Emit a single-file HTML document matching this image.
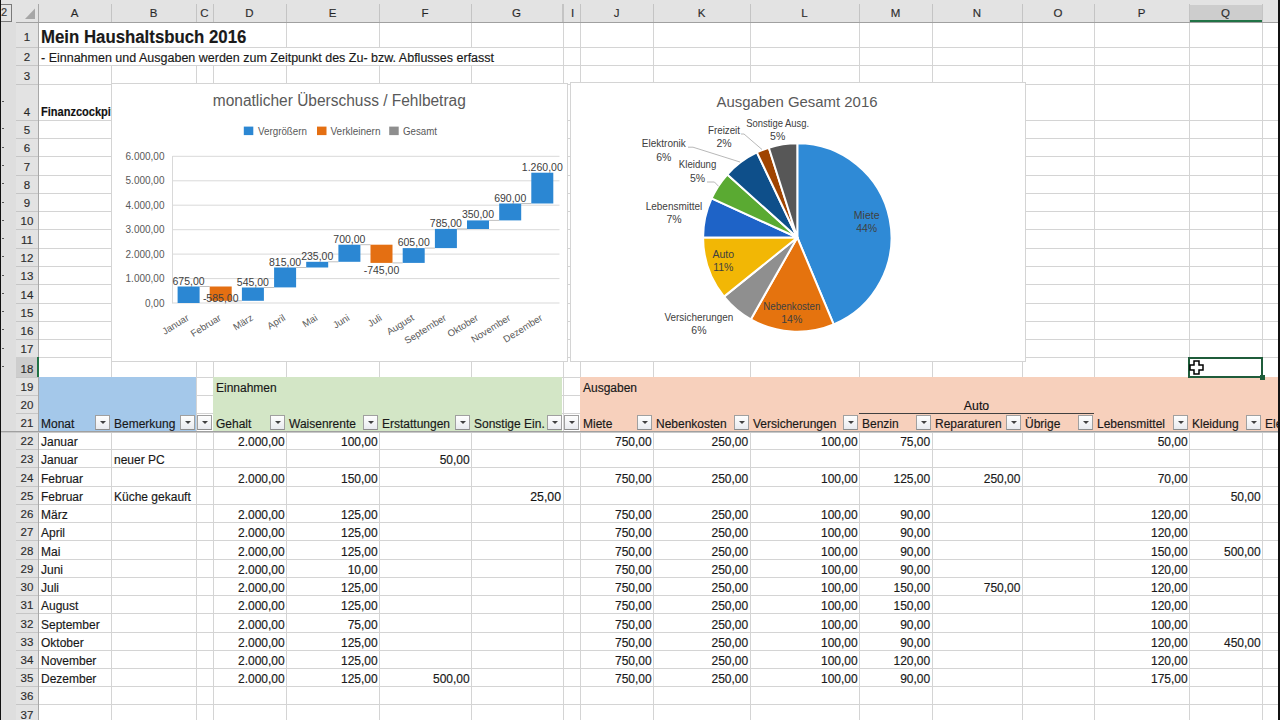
<!DOCTYPE html><html><head><meta charset="utf-8"><style>
html,body{margin:0;padding:0;background:#fff;}
body{width:1280px;height:720px;overflow:hidden;position:relative;font-family:"Liberation Sans", sans-serif;}
.a{position:absolute;}
.t{position:absolute;white-space:nowrap;font-size:12.3px;color:#111;-webkit-text-stroke:0.15px #111;line-height:14px;}
.fb{position:absolute;width:13px;height:13px;border:1px solid #a0a0a0;border-bottom-color:#8c8c8c;background:linear-gradient(#fefefe,#e9ebef);}
.fb:after{content:"";position:absolute;left:4px;top:5px;border-left:3px solid transparent;border-right:3px solid transparent;border-top:3.5px solid #404040;}
</style></head><body>
<div class="a" style="left:111px;top:65px;width:1px;height:655px;background:#d4d4d4"></div>
<div class="a" style="left:196px;top:65px;width:1px;height:655px;background:#d4d4d4"></div>
<div class="a" style="left:213px;top:65px;width:1px;height:655px;background:#d4d4d4"></div>
<div class="a" style="left:286px;top:22px;width:1px;height:25px;background:#d4d4d4"></div>
<div class="a" style="left:286px;top:65px;width:1px;height:655px;background:#d4d4d4"></div>
<div class="a" style="left:379px;top:22px;width:1px;height:25px;background:#d4d4d4"></div>
<div class="a" style="left:379px;top:65px;width:1px;height:655px;background:#d4d4d4"></div>
<div class="a" style="left:471px;top:22px;width:1px;height:25px;background:#d4d4d4"></div>
<div class="a" style="left:471px;top:65px;width:1px;height:655px;background:#d4d4d4"></div>
<div class="a" style="left:563px;top:22px;width:1px;height:698px;background:#d4d4d4"></div>
<div class="a" style="left:580px;top:22px;width:1px;height:698px;background:#d4d4d4"></div>
<div class="a" style="left:653px;top:22px;width:1px;height:698px;background:#d4d4d4"></div>
<div class="a" style="left:750px;top:22px;width:1px;height:698px;background:#d4d4d4"></div>
<div class="a" style="left:859px;top:22px;width:1px;height:698px;background:#d4d4d4"></div>
<div class="a" style="left:932px;top:22px;width:1px;height:698px;background:#d4d4d4"></div>
<div class="a" style="left:1022px;top:22px;width:1px;height:698px;background:#d4d4d4"></div>
<div class="a" style="left:1094px;top:22px;width:1px;height:698px;background:#d4d4d4"></div>
<div class="a" style="left:1189px;top:22px;width:1px;height:698px;background:#d4d4d4"></div>
<div class="a" style="left:1262px;top:22px;width:1px;height:698px;background:#d4d4d4"></div>
<div class="a" style="left:38px;top:47px;width:1242px;height:1px;background:#d4d4d4"></div>
<div class="a" style="left:38px;top:65px;width:1242px;height:1px;background:#d4d4d4"></div>
<div class="a" style="left:38px;top:84px;width:1242px;height:1px;background:#d4d4d4"></div>
<div class="a" style="left:38px;top:120px;width:1242px;height:1px;background:#d4d4d4"></div>
<div class="a" style="left:38px;top:138px;width:1242px;height:1px;background:#d4d4d4"></div>
<div class="a" style="left:38px;top:156px;width:1242px;height:1px;background:#d4d4d4"></div>
<div class="a" style="left:38px;top:175px;width:1242px;height:1px;background:#d4d4d4"></div>
<div class="a" style="left:38px;top:193px;width:1242px;height:1px;background:#d4d4d4"></div>
<div class="a" style="left:38px;top:211px;width:1242px;height:1px;background:#d4d4d4"></div>
<div class="a" style="left:38px;top:229px;width:1242px;height:1px;background:#d4d4d4"></div>
<div class="a" style="left:38px;top:248px;width:1242px;height:1px;background:#d4d4d4"></div>
<div class="a" style="left:38px;top:266px;width:1242px;height:1px;background:#d4d4d4"></div>
<div class="a" style="left:38px;top:284px;width:1242px;height:1px;background:#d4d4d4"></div>
<div class="a" style="left:38px;top:303px;width:1242px;height:1px;background:#d4d4d4"></div>
<div class="a" style="left:38px;top:321px;width:1242px;height:1px;background:#d4d4d4"></div>
<div class="a" style="left:38px;top:339px;width:1242px;height:1px;background:#d4d4d4"></div>
<div class="a" style="left:38px;top:357px;width:1242px;height:1px;background:#d4d4d4"></div>
<div class="a" style="left:38px;top:377px;width:1242px;height:1px;background:#d4d4d4"></div>
<div class="a" style="left:38px;top:395px;width:1242px;height:1px;background:#d4d4d4"></div>
<div class="a" style="left:38px;top:413px;width:1242px;height:1px;background:#d4d4d4"></div>
<div class="a" style="left:38px;top:431px;width:1242px;height:1px;background:#d4d4d4"></div>
<div class="a" style="left:38px;top:449px;width:1242px;height:1px;background:#d4d4d4"></div>
<div class="a" style="left:38px;top:467px;width:1242px;height:1px;background:#d4d4d4"></div>
<div class="a" style="left:38px;top:486px;width:1242px;height:1px;background:#d4d4d4"></div>
<div class="a" style="left:38px;top:504px;width:1242px;height:1px;background:#d4d4d4"></div>
<div class="a" style="left:38px;top:522px;width:1242px;height:1px;background:#d4d4d4"></div>
<div class="a" style="left:38px;top:540px;width:1242px;height:1px;background:#d4d4d4"></div>
<div class="a" style="left:38px;top:559px;width:1242px;height:1px;background:#d4d4d4"></div>
<div class="a" style="left:38px;top:577px;width:1242px;height:1px;background:#d4d4d4"></div>
<div class="a" style="left:38px;top:595px;width:1242px;height:1px;background:#d4d4d4"></div>
<div class="a" style="left:38px;top:613px;width:1242px;height:1px;background:#d4d4d4"></div>
<div class="a" style="left:38px;top:632px;width:1242px;height:1px;background:#d4d4d4"></div>
<div class="a" style="left:38px;top:650px;width:1242px;height:1px;background:#d4d4d4"></div>
<div class="a" style="left:38px;top:668px;width:1242px;height:1px;background:#d4d4d4"></div>
<div class="a" style="left:38px;top:686px;width:1242px;height:1px;background:#d4d4d4"></div>
<div class="a" style="left:38px;top:704px;width:1242px;height:1px;background:#d4d4d4"></div>
<div class="a" style="left:38px;top:377px;width:158px;height:54px;background:#a4c8ea;"></div>
<div class="a" style="left:213px;top:377px;width:349px;height:54px;background:#d3e6c6;"></div>
<div class="a" style="left:580px;top:377px;width:700px;height:54px;background:#f7d0bc;"></div>
<div class="a" style="left:1px;top:0px;width:15px;height:720px;background:#dedede;"></div>
<div class="a" style="left:0px;top:0px;width:1px;height:720px;background:#111;"></div>
<div class="a" style="left:1278px;top:0px;width:2px;height:720px;background:#111;"></div>
<div class="a" style="left:16px;top:22px;width:22px;height:698px;background:#e3e3e3;"></div>
<div class="a" style="left:16px;top:47px;width:22px;height:1px;background:#c6c6c6"></div>
<div class="t" style="left:16px;width:22px;text-align:center;top:30px;font-size:11.5px;color:#333">1</div>
<div class="a" style="left:16px;top:65px;width:22px;height:1px;background:#c6c6c6"></div>
<div class="t" style="left:16px;width:22px;text-align:center;top:50px;font-size:11.5px;color:#333">2</div>
<div class="a" style="left:16px;top:84px;width:22px;height:1px;background:#c6c6c6"></div>
<div class="t" style="left:16px;width:22px;text-align:center;top:69px;font-size:11.5px;color:#333">3</div>
<div class="a" style="left:16px;top:120px;width:22px;height:1px;background:#c6c6c6"></div>
<div class="t" style="left:16px;width:22px;text-align:center;top:105px;font-size:11.5px;color:#333">4</div>
<div class="a" style="left:16px;top:138px;width:22px;height:1px;background:#c6c6c6"></div>
<div class="t" style="left:16px;width:22px;text-align:center;top:123px;font-size:11.5px;color:#333">5</div>
<div class="a" style="left:16px;top:156px;width:22px;height:1px;background:#c6c6c6"></div>
<div class="t" style="left:16px;width:22px;text-align:center;top:141px;font-size:11.5px;color:#333">6</div>
<div class="a" style="left:16px;top:175px;width:22px;height:1px;background:#c6c6c6"></div>
<div class="t" style="left:16px;width:22px;text-align:center;top:160px;font-size:11.5px;color:#333">7</div>
<div class="a" style="left:16px;top:193px;width:22px;height:1px;background:#c6c6c6"></div>
<div class="t" style="left:16px;width:22px;text-align:center;top:178px;font-size:11.5px;color:#333">8</div>
<div class="a" style="left:16px;top:211px;width:22px;height:1px;background:#c6c6c6"></div>
<div class="t" style="left:16px;width:22px;text-align:center;top:196px;font-size:11.5px;color:#333">9</div>
<div class="a" style="left:16px;top:229px;width:22px;height:1px;background:#c6c6c6"></div>
<div class="t" style="left:16px;width:22px;text-align:center;top:214px;font-size:11.5px;color:#333">10</div>
<div class="a" style="left:16px;top:248px;width:22px;height:1px;background:#c6c6c6"></div>
<div class="t" style="left:16px;width:22px;text-align:center;top:233px;font-size:11.5px;color:#333">11</div>
<div class="a" style="left:16px;top:266px;width:22px;height:1px;background:#c6c6c6"></div>
<div class="t" style="left:16px;width:22px;text-align:center;top:251px;font-size:11.5px;color:#333">12</div>
<div class="a" style="left:16px;top:284px;width:22px;height:1px;background:#c6c6c6"></div>
<div class="t" style="left:16px;width:22px;text-align:center;top:269px;font-size:11.5px;color:#333">13</div>
<div class="a" style="left:16px;top:303px;width:22px;height:1px;background:#c6c6c6"></div>
<div class="t" style="left:16px;width:22px;text-align:center;top:288px;font-size:11.5px;color:#333">14</div>
<div class="a" style="left:16px;top:321px;width:22px;height:1px;background:#c6c6c6"></div>
<div class="t" style="left:16px;width:22px;text-align:center;top:306px;font-size:11.5px;color:#333">15</div>
<div class="a" style="left:16px;top:339px;width:22px;height:1px;background:#c6c6c6"></div>
<div class="t" style="left:16px;width:22px;text-align:center;top:324px;font-size:11.5px;color:#333">16</div>
<div class="a" style="left:16px;top:357px;width:22px;height:1px;background:#c6c6c6"></div>
<div class="t" style="left:16px;width:22px;text-align:center;top:342px;font-size:11.5px;color:#333">17</div>
<div class="a" style="left:16px;top:357px;width:22px;height:20px;background:#cdcdcd;"></div>
<div class="a" style="left:16px;top:377px;width:22px;height:1px;background:#c6c6c6"></div>
<div class="t" style="left:16px;width:22px;text-align:center;top:362px;font-size:11.5px;color:#333">18</div>
<div class="a" style="left:16px;top:395px;width:22px;height:1px;background:#c6c6c6"></div>
<div class="t" style="left:16px;width:22px;text-align:center;top:380px;font-size:11.5px;color:#333">19</div>
<div class="a" style="left:16px;top:413px;width:22px;height:1px;background:#c6c6c6"></div>
<div class="t" style="left:16px;width:22px;text-align:center;top:398px;font-size:11.5px;color:#333">20</div>
<div class="a" style="left:16px;top:431px;width:22px;height:1px;background:#c6c6c6"></div>
<div class="t" style="left:16px;width:22px;text-align:center;top:416px;font-size:11.5px;color:#333">21</div>
<div class="a" style="left:16px;top:449px;width:22px;height:1px;background:#c6c6c6"></div>
<div class="t" style="left:16px;width:22px;text-align:center;top:434px;font-size:11.5px;color:#333">22</div>
<div class="a" style="left:16px;top:467px;width:22px;height:1px;background:#c6c6c6"></div>
<div class="t" style="left:16px;width:22px;text-align:center;top:452px;font-size:11.5px;color:#333">23</div>
<div class="a" style="left:16px;top:486px;width:22px;height:1px;background:#c6c6c6"></div>
<div class="t" style="left:16px;width:22px;text-align:center;top:471px;font-size:11.5px;color:#333">24</div>
<div class="a" style="left:16px;top:504px;width:22px;height:1px;background:#c6c6c6"></div>
<div class="t" style="left:16px;width:22px;text-align:center;top:489px;font-size:11.5px;color:#333">25</div>
<div class="a" style="left:16px;top:522px;width:22px;height:1px;background:#c6c6c6"></div>
<div class="t" style="left:16px;width:22px;text-align:center;top:507px;font-size:11.5px;color:#333">26</div>
<div class="a" style="left:16px;top:540px;width:22px;height:1px;background:#c6c6c6"></div>
<div class="t" style="left:16px;width:22px;text-align:center;top:525px;font-size:11.5px;color:#333">27</div>
<div class="a" style="left:16px;top:559px;width:22px;height:1px;background:#c6c6c6"></div>
<div class="t" style="left:16px;width:22px;text-align:center;top:544px;font-size:11.5px;color:#333">28</div>
<div class="a" style="left:16px;top:577px;width:22px;height:1px;background:#c6c6c6"></div>
<div class="t" style="left:16px;width:22px;text-align:center;top:562px;font-size:11.5px;color:#333">29</div>
<div class="a" style="left:16px;top:595px;width:22px;height:1px;background:#c6c6c6"></div>
<div class="t" style="left:16px;width:22px;text-align:center;top:580px;font-size:11.5px;color:#333">30</div>
<div class="a" style="left:16px;top:613px;width:22px;height:1px;background:#c6c6c6"></div>
<div class="t" style="left:16px;width:22px;text-align:center;top:598px;font-size:11.5px;color:#333">31</div>
<div class="a" style="left:16px;top:632px;width:22px;height:1px;background:#c6c6c6"></div>
<div class="t" style="left:16px;width:22px;text-align:center;top:617px;font-size:11.5px;color:#333">32</div>
<div class="a" style="left:16px;top:650px;width:22px;height:1px;background:#c6c6c6"></div>
<div class="t" style="left:16px;width:22px;text-align:center;top:635px;font-size:11.5px;color:#333">33</div>
<div class="a" style="left:16px;top:668px;width:22px;height:1px;background:#c6c6c6"></div>
<div class="t" style="left:16px;width:22px;text-align:center;top:653px;font-size:11.5px;color:#333">34</div>
<div class="a" style="left:16px;top:686px;width:22px;height:1px;background:#c6c6c6"></div>
<div class="t" style="left:16px;width:22px;text-align:center;top:671px;font-size:11.5px;color:#333">35</div>
<div class="a" style="left:16px;top:704px;width:22px;height:1px;background:#c6c6c6"></div>
<div class="t" style="left:16px;width:22px;text-align:center;top:689px;font-size:11.5px;color:#333">36</div>
<div class="a" style="left:16px;top:723px;width:22px;height:1px;background:#c6c6c6"></div>
<div class="t" style="left:16px;width:22px;text-align:center;top:708px;font-size:11.5px;color:#333">37</div>
<div class="a" style="left:38px;top:22px;width:1px;height:698px;background:#a8a8a8"></div>
<div class="a" style="left:37px;top:357px;width:2px;height:20px;background:#217346;"></div>
<div class="a" style="left:1px;top:0px;width:1277px;height:22px;background:#e3e3e3;"></div>
<div class="a" style="left:1189px;top:5px;width:73px;height:17px;background:#cdcdcd;"></div>
<div class="a" style="left:1189px;top:20px;width:73px;height:2px;background:#217346;"></div>
<div class="a" style="left:16px;top:22px;width:1262px;height:1px;background:#a0a0a0"></div>
<div class="a" style="left:111px;top:4px;width:1px;height:18px;background:#c4c4c4"></div>
<div class="a" style="left:196px;top:4px;width:1px;height:18px;background:#c4c4c4"></div>
<div class="a" style="left:213px;top:4px;width:1px;height:18px;background:#c4c4c4"></div>
<div class="a" style="left:286px;top:4px;width:1px;height:18px;background:#c4c4c4"></div>
<div class="a" style="left:379px;top:4px;width:1px;height:18px;background:#c4c4c4"></div>
<div class="a" style="left:471px;top:4px;width:1px;height:18px;background:#c4c4c4"></div>
<div class="a" style="left:563px;top:4px;width:1px;height:18px;background:#c4c4c4"></div>
<div class="a" style="left:580px;top:4px;width:1px;height:18px;background:#c4c4c4"></div>
<div class="a" style="left:653px;top:4px;width:1px;height:18px;background:#c4c4c4"></div>
<div class="a" style="left:750px;top:4px;width:1px;height:18px;background:#c4c4c4"></div>
<div class="a" style="left:859px;top:4px;width:1px;height:18px;background:#c4c4c4"></div>
<div class="a" style="left:932px;top:4px;width:1px;height:18px;background:#c4c4c4"></div>
<div class="a" style="left:1022px;top:4px;width:1px;height:18px;background:#c4c4c4"></div>
<div class="a" style="left:1094px;top:4px;width:1px;height:18px;background:#c4c4c4"></div>
<div class="a" style="left:1189px;top:4px;width:1px;height:18px;background:#c4c4c4"></div>
<div class="a" style="left:1262px;top:4px;width:1px;height:18px;background:#c4c4c4"></div>
<div class="a" style="left:562px;top:4px;width:1px;height:18px;background:#c4c4c4"></div>
<div class="a" style="left:38px;top:4px;width:1px;height:18px;background:#a8a8a8"></div>
<div class="t" style="left:38px;width:73px;text-align:center;top:6px;font-size:11.5px;color:#333">A</div>
<div class="t" style="left:111px;width:85px;text-align:center;top:6px;font-size:11.5px;color:#333">B</div>
<div class="t" style="left:196px;width:17px;text-align:center;top:6px;font-size:11.5px;color:#333">C</div>
<div class="t" style="left:213px;width:73px;text-align:center;top:6px;font-size:11.5px;color:#333">D</div>
<div class="t" style="left:286px;width:93px;text-align:center;top:6px;font-size:11.5px;color:#333">E</div>
<div class="t" style="left:379px;width:92px;text-align:center;top:6px;font-size:11.5px;color:#333">F</div>
<div class="t" style="left:471px;width:91px;text-align:center;top:6px;font-size:11.5px;color:#333">G</div>
<div class="t" style="left:565px;width:15px;text-align:center;top:6px;font-size:11.5px;color:#333">I</div>
<div class="t" style="left:580px;width:73px;text-align:center;top:6px;font-size:11.5px;color:#333">J</div>
<div class="t" style="left:653px;width:97px;text-align:center;top:6px;font-size:11.5px;color:#333">K</div>
<div class="t" style="left:750px;width:109px;text-align:center;top:6px;font-size:11.5px;color:#333">L</div>
<div class="t" style="left:859px;width:73px;text-align:center;top:6px;font-size:11.5px;color:#333">M</div>
<div class="t" style="left:932px;width:90px;text-align:center;top:6px;font-size:11.5px;color:#333">N</div>
<div class="t" style="left:1022px;width:72px;text-align:center;top:6px;font-size:11.5px;color:#333">O</div>
<div class="t" style="left:1094px;width:95px;text-align:center;top:6px;font-size:11.5px;color:#333">P</div>
<div class="t" style="left:1189px;width:73px;text-align:center;top:6px;font-size:11.5px;color:#333">Q</div>
<svg class="a" style="left:0;top:0" width="40" height="22"><polygon points="25,19 35,19 35,8.5" fill="#a6a6a6"/></svg>
<div class="a" style="left:1px;top:4px;width:10px;height:16px;border:1px solid #7a7a7a;border-left:none;background:#e4e4e4"></div>
<div class="t" style="left:1px;top:5px;font-size:11px;color:#444">2</div>
<div class="a" style="left:2px;top:101px;width:2px;height:1px;background:#555;"></div>
<div class="a" style="left:2px;top:128px;width:2px;height:1px;background:#555;"></div>
<div class="a" style="left:2px;top:147px;width:2px;height:1px;background:#555;"></div>
<div class="a" style="left:2px;top:165px;width:2px;height:1px;background:#555;"></div>
<div class="a" style="left:2px;top:183px;width:2px;height:1px;background:#555;"></div>
<div class="a" style="left:2px;top:202px;width:2px;height:1px;background:#555;"></div>
<div class="a" style="left:2px;top:220px;width:2px;height:1px;background:#555;"></div>
<div class="a" style="left:2px;top:238px;width:2px;height:1px;background:#555;"></div>
<div class="a" style="left:2px;top:256px;width:2px;height:1px;background:#555;"></div>
<div class="a" style="left:2px;top:275px;width:2px;height:1px;background:#555;"></div>
<div class="a" style="left:2px;top:293px;width:2px;height:1px;background:#555;"></div>
<div class="a" style="left:2px;top:311px;width:2px;height:1px;background:#555;"></div>
<div class="a" style="left:2px;top:329px;width:2px;height:1px;background:#555;"></div>
<div class="a" style="left:2px;top:348px;width:2px;height:1px;background:#555;"></div>
<div class="a" style="left:2px;top:366px;width:2px;height:1px;background:#555;"></div>
<div class="a" style="left:1px;top:431px;width:1277px;height:1px;background:#a0a0a0"></div>
<div class="a" style="left:1px;top:432px;width:1277px;height:1px;background:#c8c8c8"></div>
<div class="t" style="left:41px;top:30px;font-weight:bold;font-size:17.5px;color:#1a1a1a;transform:scaleX(0.96);transform-origin:0 0;">Mein Haushaltsbuch 2016</div>
<div class="t" style="left:41px;top:51px;font-size:12.5px;color:#1a1a1a;">- Einnahmen und Ausgaben werden zum Zeitpunkt des Zu- bzw. Abflusses erfasst</div>
<div class="a" style="left:41px;top:104px;width:70px;height:16px;overflow:hidden"><div class="t" style="left:0;top:1px;font-weight:bold;font-size:12px;transform:scaleX(0.92);transform-origin:0 0">Finanzcockpit</div></div>
<div class="t" style="left:216px;top:381px;font-size:12px;color:#1a1a1a;">Einnahmen</div>
<div class="t" style="left:583px;top:381px;font-size:12px;color:#1a1a1a;">Ausgaben</div>
<div class="t" style="left:859px;width:235px;text-align:center;top:399px">Auto</div>
<div class="a" style="left:859px;top:413px;width:235px;height:1px;background:#404040"></div>
<div class="t" style="left:41px;top:417px;font-size:12px;color:#1a1a1a;">Monat</div>
<div class="fb" style="left:95px;top:415px"></div>
<div class="t" style="left:114px;top:417px;font-size:12px;color:#1a1a1a;">Bemerkung</div>
<div class="fb" style="left:180px;top:415px"></div>
<div class="fb" style="left:197px;top:415px"></div>
<div class="t" style="left:216px;top:417px;font-size:12px;color:#1a1a1a;">Gehalt</div>
<div class="fb" style="left:270px;top:415px"></div>
<div class="t" style="left:289px;top:417px;font-size:12px;color:#1a1a1a;">Waisenrente</div>
<div class="fb" style="left:363px;top:415px"></div>
<div class="t" style="left:382px;top:417px;font-size:12px;color:#1a1a1a;">Erstattungen</div>
<div class="fb" style="left:455px;top:415px"></div>
<div class="t" style="left:474px;top:417px;font-size:12px;color:#1a1a1a;">Sonstige Ein.</div>
<div class="fb" style="left:547px;top:415px"></div>
<div class="fb" style="left:564px;top:415px"></div>
<div class="t" style="left:583px;top:417px;font-size:12px;color:#1a1a1a;">Miete</div>
<div class="fb" style="left:637px;top:415px"></div>
<div class="t" style="left:656px;top:417px;font-size:12px;color:#1a1a1a;">Nebenkosten</div>
<div class="fb" style="left:734px;top:415px"></div>
<div class="t" style="left:753px;top:417px;font-size:12px;color:#1a1a1a;">Versicherungen</div>
<div class="fb" style="left:843px;top:415px"></div>
<div class="t" style="left:862px;top:417px;font-size:12px;color:#1a1a1a;">Benzin</div>
<div class="fb" style="left:916px;top:415px"></div>
<div class="t" style="left:935px;top:417px;font-size:12px;color:#1a1a1a;">Reparaturen</div>
<div class="fb" style="left:1006px;top:415px"></div>
<div class="t" style="left:1025px;top:417px;font-size:12px;color:#1a1a1a;">Übrige</div>
<div class="fb" style="left:1078px;top:415px"></div>
<div class="t" style="left:1097px;top:417px;font-size:12px;color:#1a1a1a;">Lebensmittel</div>
<div class="fb" style="left:1173px;top:415px"></div>
<div class="t" style="left:1192px;top:417px;font-size:12px;color:#1a1a1a;">Kleidung</div>
<div class="fb" style="left:1246px;top:415px"></div>
<div class="t" style="left:1265px;top:417px;font-size:12px;color:#1a1a1a;">Elektronik</div>
<div class="t" style="left:41px;top:435px;font-size:12px;color:#1a1a1a;">Januar</div>
<div class="t" style="right:995.30px;top:435px;font-size:12px;color:#1a1a1a;">2.000,00</div>
<div class="t" style="right:902.30px;top:435px;font-size:12px;color:#1a1a1a;">100,00</div>
<div class="t" style="right:628.30px;top:435px;font-size:12px;color:#1a1a1a;">750,00</div>
<div class="t" style="right:531.80px;top:435px;font-size:12px;color:#1a1a1a;">250,00</div>
<div class="t" style="right:422.30px;top:435px;font-size:12px;color:#1a1a1a;">100,00</div>
<div class="t" style="right:349.80px;top:435px;font-size:12px;color:#1a1a1a;">75,00</div>
<div class="t" style="right:92.30px;top:435px;font-size:12px;color:#1a1a1a;">50,00</div>
<div class="t" style="left:41px;top:453px;font-size:12px;color:#1a1a1a;">Januar</div>
<div class="t" style="left:114px;top:453px;font-size:12px;color:#1a1a1a;">neuer PC</div>
<div class="t" style="right:810.30px;top:453px;font-size:12px;color:#1a1a1a;">50,00</div>
<div class="t" style="left:41px;top:472px;font-size:12px;color:#1a1a1a;">Februar</div>
<div class="t" style="right:995.30px;top:472px;font-size:12px;color:#1a1a1a;">2.000,00</div>
<div class="t" style="right:902.30px;top:472px;font-size:12px;color:#1a1a1a;">150,00</div>
<div class="t" style="right:628.30px;top:472px;font-size:12px;color:#1a1a1a;">750,00</div>
<div class="t" style="right:531.80px;top:472px;font-size:12px;color:#1a1a1a;">250,00</div>
<div class="t" style="right:422.30px;top:472px;font-size:12px;color:#1a1a1a;">100,00</div>
<div class="t" style="right:349.80px;top:472px;font-size:12px;color:#1a1a1a;">125,00</div>
<div class="t" style="right:259.60px;top:472px;font-size:12px;color:#1a1a1a;">250,00</div>
<div class="t" style="right:92.30px;top:472px;font-size:12px;color:#1a1a1a;">70,00</div>
<div class="t" style="left:41px;top:490px;font-size:12px;color:#1a1a1a;">Februar</div>
<div class="t" style="left:114px;top:490px;font-size:12px;color:#1a1a1a;">Küche gekauft</div>
<div class="t" style="right:719px;top:490px">25,00</div>
<div class="t" style="right:19.30px;top:490px;font-size:12px;color:#1a1a1a;">50,00</div>
<div class="t" style="left:41px;top:508px;font-size:12px;color:#1a1a1a;">März</div>
<div class="t" style="right:995.30px;top:508px;font-size:12px;color:#1a1a1a;">2.000,00</div>
<div class="t" style="right:902.30px;top:508px;font-size:12px;color:#1a1a1a;">125,00</div>
<div class="t" style="right:628.30px;top:508px;font-size:12px;color:#1a1a1a;">750,00</div>
<div class="t" style="right:531.80px;top:508px;font-size:12px;color:#1a1a1a;">250,00</div>
<div class="t" style="right:422.30px;top:508px;font-size:12px;color:#1a1a1a;">100,00</div>
<div class="t" style="right:349.80px;top:508px;font-size:12px;color:#1a1a1a;">90,00</div>
<div class="t" style="right:92.30px;top:508px;font-size:12px;color:#1a1a1a;">120,00</div>
<div class="t" style="left:41px;top:526px;font-size:12px;color:#1a1a1a;">April</div>
<div class="t" style="right:995.30px;top:526px;font-size:12px;color:#1a1a1a;">2.000,00</div>
<div class="t" style="right:902.30px;top:526px;font-size:12px;color:#1a1a1a;">125,00</div>
<div class="t" style="right:628.30px;top:526px;font-size:12px;color:#1a1a1a;">750,00</div>
<div class="t" style="right:531.80px;top:526px;font-size:12px;color:#1a1a1a;">250,00</div>
<div class="t" style="right:422.30px;top:526px;font-size:12px;color:#1a1a1a;">100,00</div>
<div class="t" style="right:349.80px;top:526px;font-size:12px;color:#1a1a1a;">90,00</div>
<div class="t" style="right:92.30px;top:526px;font-size:12px;color:#1a1a1a;">120,00</div>
<div class="t" style="left:41px;top:545px;font-size:12px;color:#1a1a1a;">Mai</div>
<div class="t" style="right:995.30px;top:545px;font-size:12px;color:#1a1a1a;">2.000,00</div>
<div class="t" style="right:902.30px;top:545px;font-size:12px;color:#1a1a1a;">125,00</div>
<div class="t" style="right:628.30px;top:545px;font-size:12px;color:#1a1a1a;">750,00</div>
<div class="t" style="right:531.80px;top:545px;font-size:12px;color:#1a1a1a;">250,00</div>
<div class="t" style="right:422.30px;top:545px;font-size:12px;color:#1a1a1a;">100,00</div>
<div class="t" style="right:349.80px;top:545px;font-size:12px;color:#1a1a1a;">90,00</div>
<div class="t" style="right:92.30px;top:545px;font-size:12px;color:#1a1a1a;">150,00</div>
<div class="t" style="right:19.30px;top:545px;font-size:12px;color:#1a1a1a;">500,00</div>
<div class="t" style="left:41px;top:563px;font-size:12px;color:#1a1a1a;">Juni</div>
<div class="t" style="right:995.30px;top:563px;font-size:12px;color:#1a1a1a;">2.000,00</div>
<div class="t" style="right:902.30px;top:563px;font-size:12px;color:#1a1a1a;">10,00</div>
<div class="t" style="right:628.30px;top:563px;font-size:12px;color:#1a1a1a;">750,00</div>
<div class="t" style="right:531.80px;top:563px;font-size:12px;color:#1a1a1a;">250,00</div>
<div class="t" style="right:422.30px;top:563px;font-size:12px;color:#1a1a1a;">100,00</div>
<div class="t" style="right:349.80px;top:563px;font-size:12px;color:#1a1a1a;">90,00</div>
<div class="t" style="right:92.30px;top:563px;font-size:12px;color:#1a1a1a;">120,00</div>
<div class="t" style="left:41px;top:581px;font-size:12px;color:#1a1a1a;">Juli</div>
<div class="t" style="right:995.30px;top:581px;font-size:12px;color:#1a1a1a;">2.000,00</div>
<div class="t" style="right:902.30px;top:581px;font-size:12px;color:#1a1a1a;">125,00</div>
<div class="t" style="right:628.30px;top:581px;font-size:12px;color:#1a1a1a;">750,00</div>
<div class="t" style="right:531.80px;top:581px;font-size:12px;color:#1a1a1a;">250,00</div>
<div class="t" style="right:422.30px;top:581px;font-size:12px;color:#1a1a1a;">100,00</div>
<div class="t" style="right:349.80px;top:581px;font-size:12px;color:#1a1a1a;">150,00</div>
<div class="t" style="right:259.60px;top:581px;font-size:12px;color:#1a1a1a;">750,00</div>
<div class="t" style="right:92.30px;top:581px;font-size:12px;color:#1a1a1a;">120,00</div>
<div class="t" style="left:41px;top:599px;font-size:12px;color:#1a1a1a;">August</div>
<div class="t" style="right:995.30px;top:599px;font-size:12px;color:#1a1a1a;">2.000,00</div>
<div class="t" style="right:902.30px;top:599px;font-size:12px;color:#1a1a1a;">125,00</div>
<div class="t" style="right:628.30px;top:599px;font-size:12px;color:#1a1a1a;">750,00</div>
<div class="t" style="right:531.80px;top:599px;font-size:12px;color:#1a1a1a;">250,00</div>
<div class="t" style="right:422.30px;top:599px;font-size:12px;color:#1a1a1a;">100,00</div>
<div class="t" style="right:349.80px;top:599px;font-size:12px;color:#1a1a1a;">150,00</div>
<div class="t" style="right:92.30px;top:599px;font-size:12px;color:#1a1a1a;">120,00</div>
<div class="t" style="left:41px;top:618px;font-size:12px;color:#1a1a1a;">September</div>
<div class="t" style="right:995.30px;top:618px;font-size:12px;color:#1a1a1a;">2.000,00</div>
<div class="t" style="right:902.30px;top:618px;font-size:12px;color:#1a1a1a;">75,00</div>
<div class="t" style="right:628.30px;top:618px;font-size:12px;color:#1a1a1a;">750,00</div>
<div class="t" style="right:531.80px;top:618px;font-size:12px;color:#1a1a1a;">250,00</div>
<div class="t" style="right:422.30px;top:618px;font-size:12px;color:#1a1a1a;">100,00</div>
<div class="t" style="right:349.80px;top:618px;font-size:12px;color:#1a1a1a;">90,00</div>
<div class="t" style="right:92.30px;top:618px;font-size:12px;color:#1a1a1a;">100,00</div>
<div class="t" style="left:41px;top:636px;font-size:12px;color:#1a1a1a;">Oktober</div>
<div class="t" style="right:995.30px;top:636px;font-size:12px;color:#1a1a1a;">2.000,00</div>
<div class="t" style="right:902.30px;top:636px;font-size:12px;color:#1a1a1a;">125,00</div>
<div class="t" style="right:628.30px;top:636px;font-size:12px;color:#1a1a1a;">750,00</div>
<div class="t" style="right:531.80px;top:636px;font-size:12px;color:#1a1a1a;">250,00</div>
<div class="t" style="right:422.30px;top:636px;font-size:12px;color:#1a1a1a;">100,00</div>
<div class="t" style="right:349.80px;top:636px;font-size:12px;color:#1a1a1a;">90,00</div>
<div class="t" style="right:92.30px;top:636px;font-size:12px;color:#1a1a1a;">120,00</div>
<div class="t" style="right:19.30px;top:636px;font-size:12px;color:#1a1a1a;">450,00</div>
<div class="t" style="left:41px;top:654px;font-size:12px;color:#1a1a1a;">November</div>
<div class="t" style="right:995.30px;top:654px;font-size:12px;color:#1a1a1a;">2.000,00</div>
<div class="t" style="right:902.30px;top:654px;font-size:12px;color:#1a1a1a;">125,00</div>
<div class="t" style="right:628.30px;top:654px;font-size:12px;color:#1a1a1a;">750,00</div>
<div class="t" style="right:531.80px;top:654px;font-size:12px;color:#1a1a1a;">250,00</div>
<div class="t" style="right:422.30px;top:654px;font-size:12px;color:#1a1a1a;">100,00</div>
<div class="t" style="right:349.80px;top:654px;font-size:12px;color:#1a1a1a;">120,00</div>
<div class="t" style="right:92.30px;top:654px;font-size:12px;color:#1a1a1a;">120,00</div>
<div class="t" style="left:41px;top:672px;font-size:12px;color:#1a1a1a;">Dezember</div>
<div class="t" style="right:995.30px;top:672px;font-size:12px;color:#1a1a1a;">2.000,00</div>
<div class="t" style="right:902.30px;top:672px;font-size:12px;color:#1a1a1a;">125,00</div>
<div class="t" style="right:810.30px;top:672px;font-size:12px;color:#1a1a1a;">500,00</div>
<div class="t" style="right:628.30px;top:672px;font-size:12px;color:#1a1a1a;">750,00</div>
<div class="t" style="right:531.80px;top:672px;font-size:12px;color:#1a1a1a;">250,00</div>
<div class="t" style="right:422.30px;top:672px;font-size:12px;color:#1a1a1a;">100,00</div>
<div class="t" style="right:349.80px;top:672px;font-size:12px;color:#1a1a1a;">90,00</div>
<div class="t" style="right:92.30px;top:672px;font-size:12px;color:#1a1a1a;">175,00</div>
<div class="a" style="left:111px;top:83px;width:455px;height:277px;background:#fff;border:1px solid #d4d4d4"></div>
<div class="a" style="left:570px;top:82px;width:454px;height:278px;background:#fff;border:1px solid #d4d4d4"></div>
<svg class="a" style="left:0;top:0" width="1280" height="720" font-family="Liberation Sans, sans-serif">
<text x="339.3" y="105.8" text-anchor="middle" font-size="16" fill="#595959" textLength="253" lengthAdjust="spacingAndGlyphs">monatlicher Überschuss / Fehlbetrag</text>
<rect x="243.8" y="126.6" width="9.5" height="8.5" fill="#2b87d3"/>
<text x="258" y="134.5" font-size="10" fill="#595959" textLength="49" lengthAdjust="spacingAndGlyphs">Vergrößern</text>
<rect x="317" y="126.6" width="9.5" height="8.5" fill="#e46f12"/>
<text x="330.5" y="134.5" font-size="10" fill="#595959" textLength="50" lengthAdjust="spacingAndGlyphs">Verkleinern</text>
<rect x="389.2" y="126.6" width="9.5" height="8.5" fill="#8e8e8e"/>
<text x="403" y="134.5" font-size="10" fill="#595959" textLength="34" lengthAdjust="spacingAndGlyphs">Gesamt</text>
<line x1="172.5" y1="303.0" x2="559.5" y2="303.0" stroke="#d9d9d9" stroke-width="1"/>
<text x="164.5" y="306.6" text-anchor="end" font-size="10" fill="#595959">0,00</text>
<line x1="172.5" y1="278.6" x2="559.5" y2="278.6" stroke="#d9d9d9" stroke-width="1"/>
<text x="164.5" y="282.2" text-anchor="end" font-size="10" fill="#595959">1.000,00</text>
<line x1="172.5" y1="254.1" x2="559.5" y2="254.1" stroke="#d9d9d9" stroke-width="1"/>
<text x="164.5" y="257.7" text-anchor="end" font-size="10" fill="#595959">2.000,00</text>
<line x1="172.5" y1="229.7" x2="559.5" y2="229.7" stroke="#d9d9d9" stroke-width="1"/>
<text x="164.5" y="233.2" text-anchor="end" font-size="10" fill="#595959">3.000,00</text>
<line x1="172.5" y1="205.2" x2="559.5" y2="205.2" stroke="#d9d9d9" stroke-width="1"/>
<text x="164.5" y="208.8" text-anchor="end" font-size="10" fill="#595959">4.000,00</text>
<line x1="172.5" y1="180.8" x2="559.5" y2="180.8" stroke="#d9d9d9" stroke-width="1"/>
<text x="164.5" y="184.3" text-anchor="end" font-size="10" fill="#595959">5.000,00</text>
<line x1="172.5" y1="156.3" x2="559.5" y2="156.3" stroke="#d9d9d9" stroke-width="1"/>
<text x="164.5" y="159.9" text-anchor="end" font-size="10" fill="#595959">6.000,00</text>
<line x1="172.5" y1="156" x2="172.5" y2="303.5" stroke="#d9d9d9" stroke-width="1"/>
<rect x="177.6" y="286.5" width="22" height="16.5" fill="#2b87d3"/>
<line x1="199.6" y1="286.5" x2="209.7" y2="286.5" stroke="#b0b0b0" stroke-width="0.8"/>
<text x="188.6" y="284.5" text-anchor="middle" font-size="10.5" fill="#404040">675,00</text>
<text transform="translate(189.6,319.5) rotate(-32)" text-anchor="end" font-size="9.6" fill="#595959">Januar</text>
<rect x="209.7" y="286.5" width="22" height="14.3" fill="#e46f12"/>
<line x1="231.7" y1="300.8" x2="241.9" y2="300.8" stroke="#b0b0b0" stroke-width="0.8"/>
<text x="220.7" y="301.5" text-anchor="middle" font-size="10.5" fill="#404040">-585,00</text>
<text transform="translate(221.7,319.5) rotate(-32)" text-anchor="end" font-size="9.6" fill="#595959">Februar</text>
<rect x="241.9" y="287.5" width="22" height="13.3" fill="#2b87d3"/>
<line x1="263.9" y1="287.5" x2="274.1" y2="287.5" stroke="#b0b0b0" stroke-width="0.8"/>
<text x="252.9" y="285.5" text-anchor="middle" font-size="10.5" fill="#404040">545,00</text>
<text transform="translate(253.9,319.5) rotate(-32)" text-anchor="end" font-size="9.6" fill="#595959">März</text>
<rect x="274.1" y="267.5" width="22" height="19.9" fill="#2b87d3"/>
<line x1="296.1" y1="267.5" x2="306.2" y2="267.5" stroke="#b0b0b0" stroke-width="0.8"/>
<text x="285.1" y="265.5" text-anchor="middle" font-size="10.5" fill="#404040">815,00</text>
<text transform="translate(286.1,319.5) rotate(-32)" text-anchor="end" font-size="9.6" fill="#595959">April</text>
<rect x="306.2" y="261.8" width="22" height="5.7" fill="#2b87d3"/>
<line x1="328.2" y1="261.8" x2="338.4" y2="261.8" stroke="#b0b0b0" stroke-width="0.8"/>
<text x="317.2" y="259.8" text-anchor="middle" font-size="10.5" fill="#404040">235,00</text>
<text transform="translate(318.2,319.5) rotate(-32)" text-anchor="end" font-size="9.6" fill="#595959">Mai</text>
<rect x="338.4" y="244.7" width="22" height="17.1" fill="#2b87d3"/>
<line x1="360.4" y1="244.7" x2="370.5" y2="244.7" stroke="#b0b0b0" stroke-width="0.8"/>
<text x="349.4" y="242.7" text-anchor="middle" font-size="10.5" fill="#404040">700,00</text>
<text transform="translate(350.4,319.5) rotate(-32)" text-anchor="end" font-size="9.6" fill="#595959">Juni</text>
<rect x="370.5" y="244.7" width="22" height="18.2" fill="#e46f12"/>
<line x1="392.5" y1="262.9" x2="402.7" y2="262.9" stroke="#b0b0b0" stroke-width="0.8"/>
<text x="381.5" y="274.4" text-anchor="middle" font-size="10.5" fill="#404040">-745,00</text>
<text transform="translate(382.5,319.5) rotate(-32)" text-anchor="end" font-size="9.6" fill="#595959">Juli</text>
<rect x="402.7" y="248.1" width="22" height="14.8" fill="#2b87d3"/>
<line x1="424.7" y1="248.1" x2="434.9" y2="248.1" stroke="#b0b0b0" stroke-width="0.8"/>
<text x="413.7" y="246.1" text-anchor="middle" font-size="10.5" fill="#404040">605,00</text>
<text transform="translate(414.7,319.5) rotate(-32)" text-anchor="end" font-size="9.6" fill="#595959">August</text>
<rect x="434.9" y="228.9" width="22" height="19.2" fill="#2b87d3"/>
<line x1="456.9" y1="228.9" x2="467.0" y2="228.9" stroke="#b0b0b0" stroke-width="0.8"/>
<text x="445.9" y="226.9" text-anchor="middle" font-size="10.5" fill="#404040">785,00</text>
<text transform="translate(446.9,319.5) rotate(-32)" text-anchor="end" font-size="9.6" fill="#595959">September</text>
<rect x="467.0" y="220.4" width="22" height="8.6" fill="#2b87d3"/>
<line x1="489.0" y1="220.4" x2="499.2" y2="220.4" stroke="#b0b0b0" stroke-width="0.8"/>
<text x="478.0" y="218.4" text-anchor="middle" font-size="10.5" fill="#404040">350,00</text>
<text transform="translate(479.0,319.5) rotate(-32)" text-anchor="end" font-size="9.6" fill="#595959">Oktober</text>
<rect x="499.2" y="203.5" width="22" height="16.9" fill="#2b87d3"/>
<line x1="521.2" y1="203.5" x2="531.3" y2="203.5" stroke="#b0b0b0" stroke-width="0.8"/>
<text x="510.2" y="201.5" text-anchor="middle" font-size="10.5" fill="#404040">690,00</text>
<text transform="translate(511.2,319.5) rotate(-32)" text-anchor="end" font-size="9.6" fill="#595959">November</text>
<rect x="531.3" y="172.7" width="22" height="30.8" fill="#2b87d3"/>
<text x="542.3" y="170.7" text-anchor="middle" font-size="10.5" fill="#404040">1.260,00</text>
<text transform="translate(543.3,319.5) rotate(-32)" text-anchor="end" font-size="9.6" fill="#595959">Dezember</text>
<path d="M797.3,237.5 L797.30,143.30 A94.2,94.2 0 0 1 833.65,324.40 Z" fill="#2f8ad6" stroke="#fff" stroke-width="2" stroke-linejoin="round"/>
<path d="M797.3,237.5 L833.65,324.40 A94.2,94.2 0 0 1 750.77,319.41 Z" fill="#e5730e" stroke="#fff" stroke-width="2" stroke-linejoin="round"/>
<path d="M797.3,237.5 L750.77,319.41 A94.2,94.2 0 0 1 723.99,296.65 Z" fill="#8f8f8f" stroke="#fff" stroke-width="2" stroke-linejoin="round"/>
<path d="M797.3,237.5 L723.99,296.65 A94.2,94.2 0 0 1 703.10,237.50 Z" fill="#f2b705" stroke="#fff" stroke-width="2" stroke-linejoin="round"/>
<path d="M797.3,237.5 L703.10,237.50 A94.2,94.2 0 0 1 711.58,198.44 Z" fill="#1e63c7" stroke="#fff" stroke-width="2" stroke-linejoin="round"/>
<path d="M797.3,237.5 L711.58,198.44 A94.2,94.2 0 0 1 727.30,174.47 Z" fill="#5aaa32" stroke="#fff" stroke-width="2" stroke-linejoin="round"/>
<path d="M797.3,237.5 L727.30,174.47 A94.2,94.2 0 0 1 756.89,152.41 Z" fill="#0e4f8a" stroke="#fff" stroke-width="2" stroke-linejoin="round"/>
<path d="M797.3,237.5 L756.89,152.41 A94.2,94.2 0 0 1 768.82,147.71 Z" fill="#a04400" stroke="#fff" stroke-width="2" stroke-linejoin="round"/>
<path d="M797.3,237.5 L768.82,147.71 A94.2,94.2 0 0 1 797.30,143.30 Z" fill="#575757" stroke="#fff" stroke-width="2" stroke-linejoin="round"/>
<text x="797" y="106.7" text-anchor="middle" font-size="15" fill="#595959" textLength="161" lengthAdjust="spacingAndGlyphs">Ausgaben Gesamt 2016</text>
<text x="777.7" y="126.6" text-anchor="middle" font-size="10.5" fill="#404040" textLength="63" lengthAdjust="spacingAndGlyphs">Sonstige Ausg.</text>
<text x="777.7" y="139.9" text-anchor="middle" font-size="10.5" fill="#404040">5%</text>
<text x="724" y="134" text-anchor="middle" font-size="10.5" fill="#404040" textLength="32" lengthAdjust="spacingAndGlyphs">Freizeit</text>
<text x="724" y="147.3" text-anchor="middle" font-size="10.5" fill="#404040">2%</text>
<text x="663.8" y="147.2" text-anchor="middle" font-size="10.5" fill="#404040" textLength="44" lengthAdjust="spacingAndGlyphs">Elektronik</text>
<text x="663.8" y="160.5" text-anchor="middle" font-size="10.5" fill="#404040">6%</text>
<text x="697.6" y="168.3" text-anchor="middle" font-size="10.5" fill="#404040" textLength="37.5" lengthAdjust="spacingAndGlyphs">Kleidung</text>
<text x="697.6" y="181.6" text-anchor="middle" font-size="10.5" fill="#404040">5%</text>
<text x="674" y="210" text-anchor="middle" font-size="10.5" fill="#404040" textLength="56.5" lengthAdjust="spacingAndGlyphs">Lebensmittel</text>
<text x="674" y="223.3" text-anchor="middle" font-size="10.5" fill="#404040">7%</text>
<text x="866.7" y="218.9" text-anchor="middle" font-size="10.5" fill="#404040">Miete</text>
<text x="866.7" y="232.2" text-anchor="middle" font-size="10.5" fill="#404040">44%</text>
<text x="723.3" y="257.8" text-anchor="middle" font-size="10.5" fill="#404040">Auto</text>
<text x="723.3" y="271.1" text-anchor="middle" font-size="10.5" fill="#404040">11%</text>
<text x="791.8" y="309.6" text-anchor="middle" font-size="10.5" fill="#404040" textLength="57" lengthAdjust="spacingAndGlyphs">Nebenkosten</text>
<text x="791.8" y="322.9" text-anchor="middle" font-size="10.5" fill="#404040">14%</text>
<text x="698.9" y="321.1" text-anchor="middle" font-size="10.5" fill="#404040" textLength="69" lengthAdjust="spacingAndGlyphs">Versicherungen</text>
<text x="698.9" y="334.4" text-anchor="middle" font-size="10.5" fill="#404040">6%</text>
<polyline points="741,134 744,134 762,149.5" fill="none" stroke="#a6a6a6" stroke-width="0.8"/>
<polyline points="688,147.2 693,147.2 740,162" fill="none" stroke="#a6a6a6" stroke-width="0.8"/>
<polyline points="707,182 714.4,182 718.6,186.3" fill="none" stroke="#a6a6a6" stroke-width="0.8"/>
</svg>
<div class="a" style="left:1188px;top:357px;width:71px;height:17px;border:2px solid #1f5c3a"></div>
<div class="a" style="left:1260px;top:375px;width:5px;height:5px;background:#1f5c3a;"></div>
<svg class="a" style="left:1189px;top:360px" width="16" height="16"><path d="M5,1 H10 V5 H14 V10 H10 V14 H5 V10 H1 V5 H5 Z" fill="#fff" stroke="#000" stroke-width="1.5"/></svg>
</body></html>
